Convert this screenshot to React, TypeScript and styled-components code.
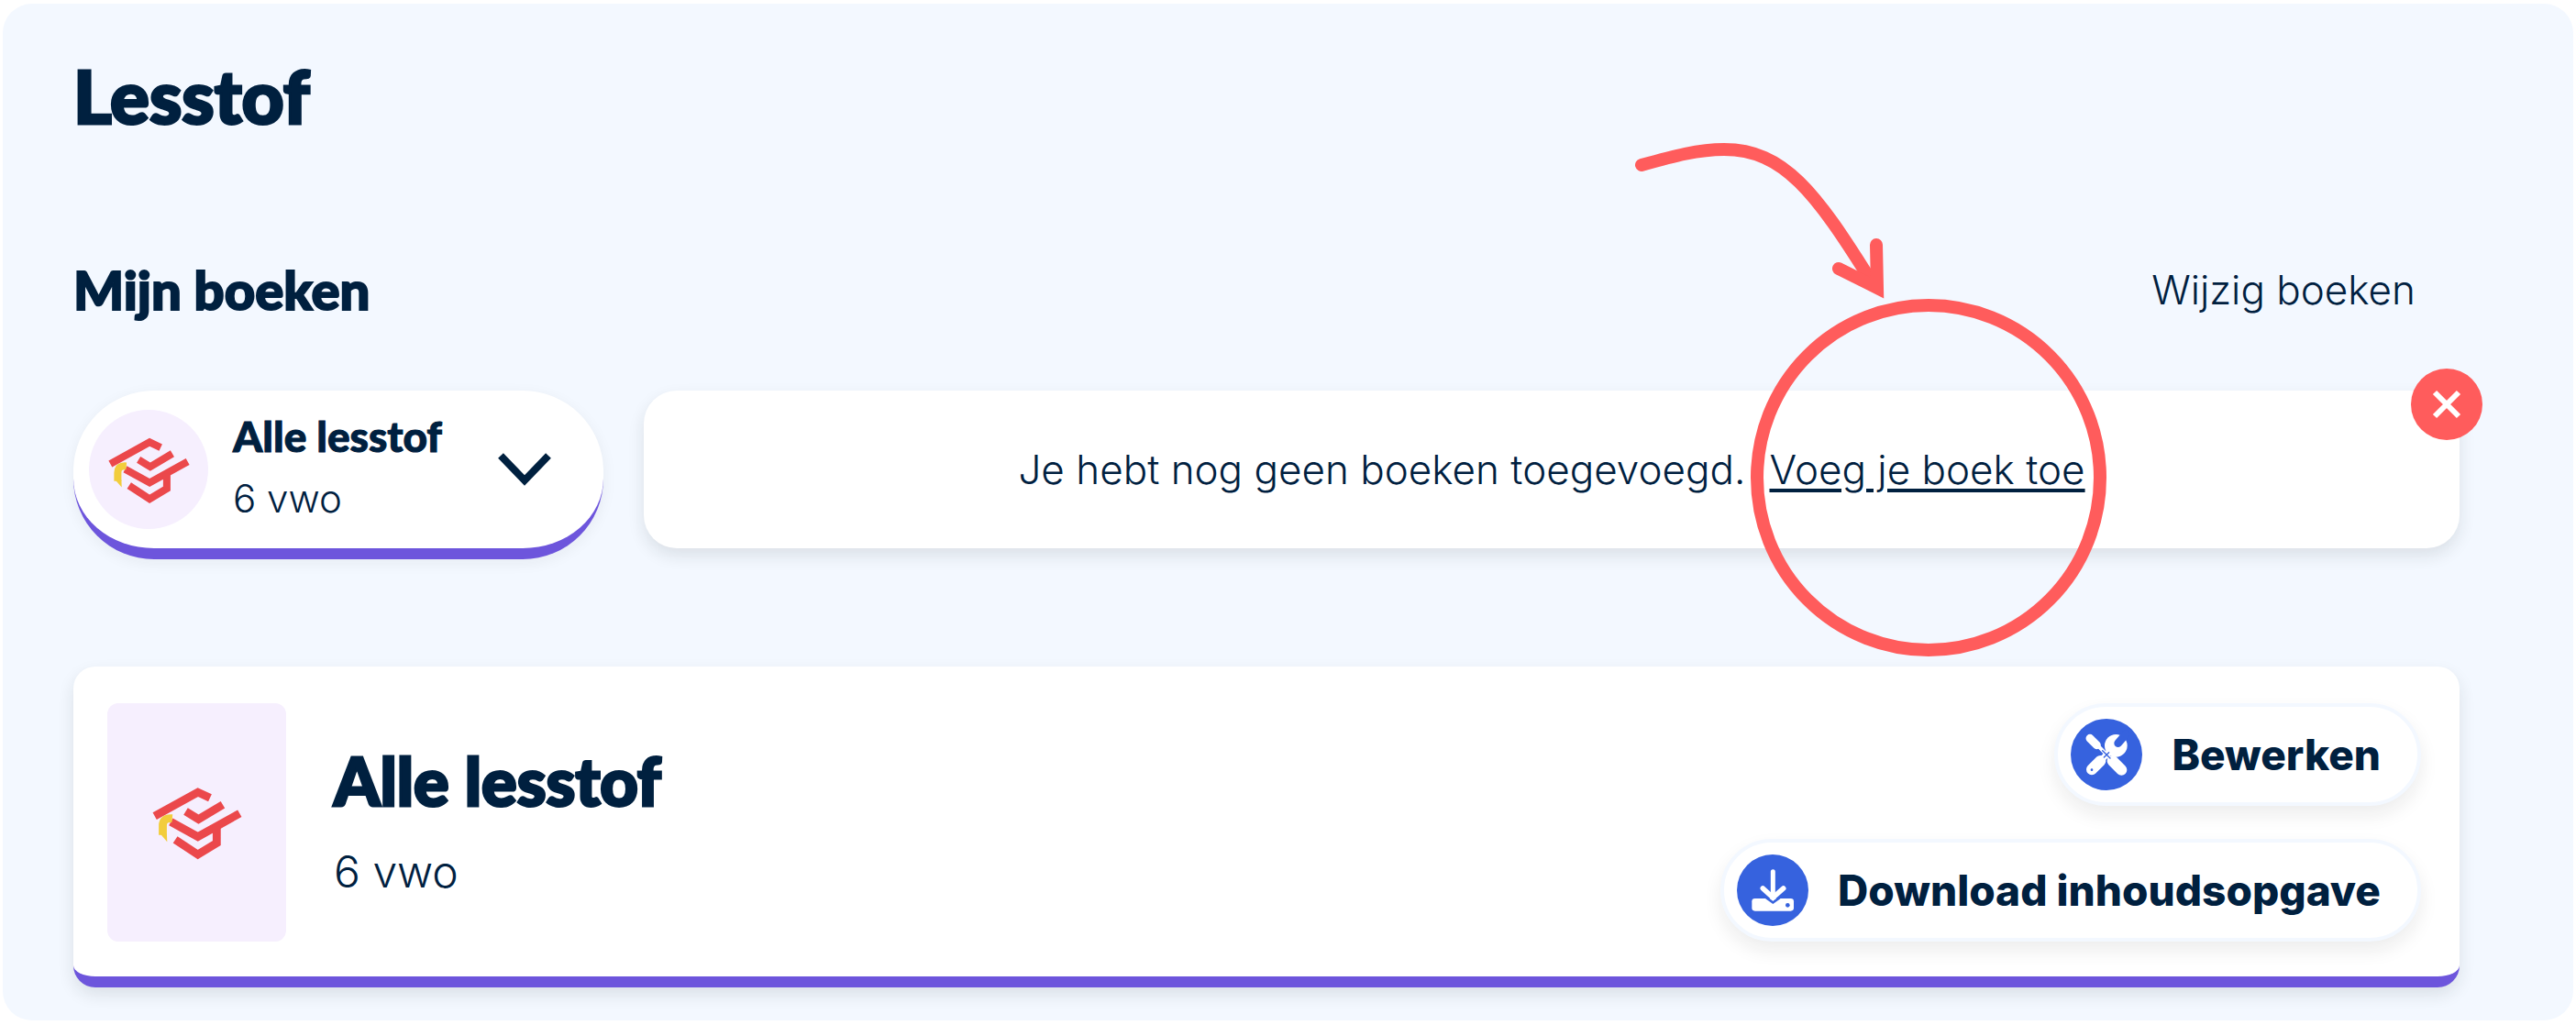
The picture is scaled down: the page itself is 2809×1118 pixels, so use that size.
import React from 'react';
import styled, { createGlobalStyle } from 'styled-components';

const navy = '#00203f';
const red = '#ff5c5c';
const purple = '#6d55dc';
const mist = '#f3f8ff';
const lilac = '#f6effe';
const blue = '#3662de';

const heading = '"Lato", "Open Sans", sans-serif';
const body = '"Inter", "Open Sans", sans-serif';
const lift = '0 8px 18px rgba(30, 35, 40, 0.11)';

const GlobalStyle = createGlobalStyle`
  *, *::before, *::after { box-sizing: border-box; }
  body { margin: 0; background: #fff; color: ${navy}; font-family: ${body}; }
  h1, h2, p { margin: 0; }
  button { border: 0; margin: 0; padding: 0; font: inherit; color: inherit; cursor: pointer; }
`;

const Panel = styled.main`
  margin: 4px 3px;
  padding: 52px 124px 36px 77px;
  border-radius: 32px;
  background: ${mist};
`;

const Title = styled.h1`
  font: 900 80px/96px ${heading};
  -webkit-text-stroke: 3px ${navy};
`;

const SectionHead = styled.div`
  display: flex;
  align-items: center;
  justify-content: space-between;
  margin-top: 130px;
  padding-right: 48px;
`;

const SectionTitle = styled.h2`
  font: 900 58px/68px ${heading};
  -webkit-text-stroke: 2px ${navy};
`;

const Light = styled.p<{ $large?: boolean }>`
  font: 300 ${p => (p.$large ? '48px/64px' : '42px/56px')} ${body};
`;

const TextButton = styled.button`
  background: none;
  font: 300 44px/56px ${body};
`;

const Shelf = styled.div`
  display: flex;
  align-items: flex-start;
  gap: 44px;
  margin-top: 76px;
`;

const Picker = styled.button`
  display: flex;
  align-items: center;
  flex: 0 0 578px;
  height: 184px;
  padding: 0 57px 0 17px;
  border-bottom: 12px solid ${purple};
  border-radius: 88px;
  background: #fff;
  box-shadow: 0 4px 16px rgba(30, 35, 40, 0.06);
  text-align: left;
`;

const Avatar = styled.span`
  display: grid;
  place-items: center;
  flex: none;
  width: 130px;
  height: 130px;
  border-radius: 50%;
  background: ${lilac};
`;

const PickerText = styled.span`
  display: flex;
  flex-direction: column;
  gap: 12px;
  flex: 1;
  margin-left: 27px;
  padding-bottom: 4px;
`;

const PickerName = styled.span`
  font: 900 46px/56px ${heading};
  -webkit-text-stroke: 1px ${navy};
`;

const Notice = styled.section`
  position: relative;
  display: flex;
  align-items: center;
  justify-content: center;
  gap: 26px;
  flex: 1;
  min-height: 172px;
  border-radius: 36px;
  background: #fff;
  box-shadow: ${lift};
  font: 300 44px/56px ${body};
`;

const LinkSpot = styled.span`
  position: relative;
`;

const AddLink = styled.a`
  color: inherit;
  text-decoration: underline;
  text-decoration-thickness: 4px;
  text-underline-offset: 5px;
`;

const Pointer = styled.svg`
  position: absolute;
  left: calc(50% - 322px);
  bottom: -180px;
  width: 520px;
  height: 565px;
  overflow: visible;
  pointer-events: none;
`;

const Close = styled.button`
  position: absolute;
  top: -24px;
  right: -25px;
  width: 78px;
  height: 78px;
  border-radius: 50%;
  background: ${red};
  display: grid;
  place-items: center;
`;

const BookCard = styled.section`
  display: flex;
  align-items: center;
  gap: 52px;
  margin-top: 117px;
  padding: 40px 42px 38px 37px;
  border-bottom: 12px solid ${purple};
  border-radius: 24px;
  background: #fff;
  box-shadow: ${lift};
`;

const Cover = styled.div`
  display: grid;
  place-items: center;
  flex: none;
  width: 195px;
  height: 260px;
  border-radius: 12px;
  background: ${lilac};
`;

const BookText = styled.div`
  display: flex;
  flex-direction: column;
  gap: 24px;
  flex: 1;
  padding-bottom: 4px;
`;

const BookTitle = styled.h2`
  font: 900 72px/88px ${heading};
  -webkit-text-stroke: 3px ${navy};
`;

const Actions = styled.div`
  display: flex;
  flex-direction: column;
  align-items: flex-end;
  gap: 36px;
`;

const Action = styled.button`
  display: flex;
  align-items: center;
  gap: 32px;
  height: 112px;
  padding: 0 40px 0 14px;
  border: 4px solid ${mist};
  border-radius: 56px;
  background: #fff;
  box-shadow: 0 10px 20px rgba(30, 30, 20, 0.08);
  font: 800 46px/56px ${body};
`;

const CapMark = ({ width }: { width: number }) => (
  <svg width={width} viewBox="50 105 272 222" fill="none" strokeWidth="24" aria-hidden="true">
    <g stroke="#eb484b">
      <path d="M60 198 L188 127 L224 144" />
      <path d="M152 184 L190 207 L262 164" />
      <path d="M108 215 L188 259 L312 190" />
      <path d="M121 268 L188 312 L244 278 L244 228" />
    </g>
    <path d="M112 205 C92 203 84 212 84 226 L84 254" stroke="#f2cd3c" />
    <path d="M76 250 L96 250 L97 274 Z" fill="#f2cd3c" />
  </svg>
);

const ToolsIcon = () => (
  <svg width="78" height="78" viewBox="81 42 234 234" fill="none" stroke="#fff" strokeLinecap="round" aria-hidden="true">
    <circle cx="198" cy="159" r="117" fill={blue} stroke="none" />
    <path d="M144 106 L166 128" strokeWidth="27" />
    <path d="M160 120 L232 194" strokeWidth="12" />
    <circle cx="229" cy="130" r="37" fill="#fff" stroke="none" />
    <path d="M236 122 L262 92" stroke={blue} strokeWidth="26" />
    <path d="M176 182 L218 140" strokeWidth="20" />
    <path d="M150 208 L178 180" strokeWidth="36" />
    <path d="M218 180 L247 209" strokeWidth="36" />
    <path d="M185 146 L210 171 M190 168 L206 152" stroke={blue} strokeWidth="4" />
    <circle cx="150" cy="209" r="4" fill={blue} stroke="none" />
  </svg>
);

const DownloadIcon = () => (
  <svg width="78" height="78" viewBox="69 62 234 234" fill="none" stroke="#fff" strokeLinecap="round" aria-hidden="true">
    <circle cx="186" cy="179" r="117" fill={blue} stroke="none" />
    <rect x="118" y="206" width="137" height="41" rx="10" fill="#fff" stroke="none" />
    <path d="M166 204 L187 219 L208 204" stroke={blue} strokeWidth="8" />
    <path d="M187 118 L187 198" strokeWidth="15" />
    <path d="M154 173 L187 203 L221 173" strokeWidth="17" />
    <circle cx="235" cy="228" r="7" fill={blue} stroke="none" />
  </svg>
);

export default function App() {
  return (
    <>
      <GlobalStyle />
      <Panel>
        <Title>Lesstof</Title>
        <SectionHead>
          <SectionTitle>Mijn boeken</SectionTitle>
          <TextButton type="button">Wijzig boeken</TextButton>
        </SectionHead>
        <Shelf>
          <Picker type="button" aria-haspopup="listbox">
            <Avatar><CapMark width={91} /></Avatar>
            <PickerText>
              <PickerName>Alle lesstof</PickerName>
              <Light as="span">6 vwo</Light>
            </PickerText>
            <svg width="58" height="36" viewBox="0 0 58 36" fill="none" stroke={navy} strokeWidth="8" aria-hidden="true">
              <path d="M3 3 L29 30 L55 3" />
            </svg>
          </Picker>
          <Notice>
            <span>Je hebt nog geen boeken toegevoegd.</span>
            <LinkSpot>
              <AddLink href="#boek">Voeg je boek toe</AddLink>
              <Pointer viewBox="1780 155 520 565" fill="none" stroke={red} strokeWidth="14" aria-hidden="true">
                <ellipse cx="2103" cy="521" rx="187" ry="188" />
                <path d="M1790 180 C1826 170 1852 163 1880 163 C1945 163 1980 210 2040 306" strokeLinecap="round" />
                <path d="M2005 293 L2047 314 L2046 267" strokeLinecap="round" strokeMiterlimit="8" />
              </Pointer>
            </LinkSpot>
            <Close type="button" aria-label="Sluiten">
              <svg width="32" height="32" viewBox="0 0 32 32" stroke="#fff" strokeWidth="6" aria-hidden="true">
                <path d="M3 3 L29 29 M29 3 L3 29" />
              </svg>
            </Close>
          </Notice>
        </Shelf>
        <BookCard>
          <Cover><CapMark width={100} /></Cover>
          <BookText>
            <BookTitle>Alle lesstof</BookTitle>
            <Light $large>6 vwo</Light>
          </BookText>
          <Actions>
            <Action type="button"><ToolsIcon />Bewerken</Action>
            <Action type="button"><DownloadIcon />Download inhoudsopgave</Action>
          </Actions>
        </BookCard>
      </Panel>
    </>
  );
}
